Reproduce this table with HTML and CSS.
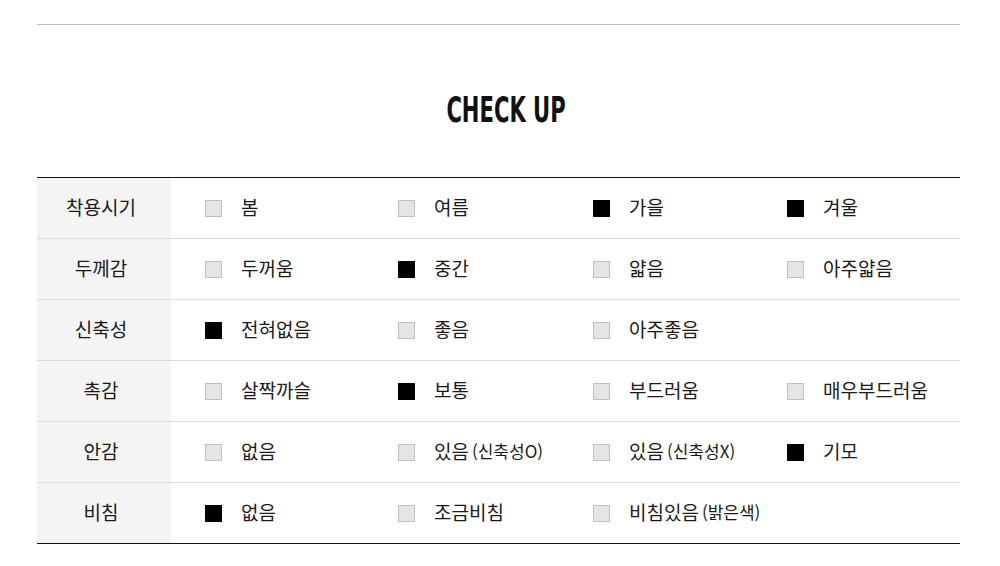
FILE: index.html
```html
<!DOCTYPE html>
<html lang="ko">
<head>
<meta charset="utf-8">
<link rel="stylesheet" href="styles.css">
</head>
<body>
<div class="wrap">
  <div class="topline"></div>
  <h2 class="title"><span>CHECK UP</span></h2>
  <div class="table">
    <div class="row">
      <div class="head">착용시기</div>
      <div class="cells">
        <div class="item"><span class="box"></span>봄</div>
        <div class="item"><span class="box"></span>여름</div>
        <div class="item"><span class="box on"></span>가을</div>
        <div class="item"><span class="box on"></span>겨울</div>
      </div>
    </div>
    <div class="row">
      <div class="head">두께감</div>
      <div class="cells">
        <div class="item"><span class="box"></span>두꺼움</div>
        <div class="item"><span class="box on"></span>중간</div>
        <div class="item"><span class="box"></span>얇음</div>
        <div class="item"><span class="box"></span>아주얇음</div>
      </div>
    </div>
    <div class="row">
      <div class="head">신축성</div>
      <div class="cells">
        <div class="item"><span class="box on"></span>전혀없음</div>
        <div class="item"><span class="box"></span>좋음</div>
        <div class="item"><span class="box"></span>아주좋음</div>
      </div>
    </div>
    <div class="row">
      <div class="head">촉감</div>
      <div class="cells">
        <div class="item"><span class="box"></span>살짝까슬</div>
        <div class="item"><span class="box on"></span>보통</div>
        <div class="item"><span class="box"></span>부드러움</div>
        <div class="item"><span class="box"></span>매우부드러움</div>
      </div>
    </div>
    <div class="row">
      <div class="head">안감</div>
      <div class="cells">
        <div class="item"><span class="box"></span>없음</div>
        <div class="item"><span class="box"></span>있음 <small>(신축성O)</small></div>
        <div class="item"><span class="box"></span>있음 <small>(신축성X)</small></div>
        <div class="item"><span class="box on"></span>기모</div>
      </div>
    </div>
    <div class="row">
      <div class="head">비침</div>
      <div class="cells">
        <div class="item"><span class="box on"></span>없음</div>
        <div class="item"><span class="box"></span>조금비침</div>
        <div class="item"><span class="box"></span>비침있음 <small>(밝은색)</small></div>
      </div>
    </div>
  </div>
</div>
</body>
</html>
```
FILE: styles.css
```css
html, body {
  margin: 0;
  padding: 0;
  background: #fff;
}
body {
  font-family: "Noto Sans CJK KR", "Noto Sans", sans-serif;
  color: #111;
}
.wrap {
  margin-left: 37px;
  width: 923px;
  padding-top: 24px;
}
.topline {
  height: 1px;
  background: #bdbdbd;
}
.title {
  margin: 0;
  padding-top: 18px;
  padding-left: 16px;
  height: 134px;
  display: flex;
  align-items: center;
  justify-content: center;
  font-family: "DejaVu Sans", sans-serif;
  font-stretch: condensed;
  font-weight: bold;
  font-size: 35px;
  color: #111;
  letter-spacing: 0;
}
.title span {
  display: inline-block;
  transform: scaleX(0.67);
}
.table {
  border-top: 1px solid #111;
  border-bottom: 1px solid #111;
}
.row {
  display: flex;
  height: 60px;
}
.row + .row {
  border-top: 1px solid #dcdcdc;
}
.head {
  flex: none;
  box-sizing: border-box;
  width: 134px;
  padding-right: 6px;
  padding-bottom: 4px;
  background: #f4f4f4;
  display: flex;
  align-items: center;
  justify-content: center;
  font-size: 19px;
  color: #1a1a1a;
}
.cells {
  flex: 1;
  min-width: 0;
  display: grid;
  grid-template-columns: 193px 195px 194px 1fr;
  padding-left: 34px;
  align-items: center;
}
.item {
  display: flex;
  align-items: center;
  padding-bottom: 4px;
  font-size: 19px;
  color: #1a1a1a;
  white-space: nowrap;
}
.item small {
  font-size: 17px;
  margin-left: 3px;
}
.box {
  width: 15px;
  height: 15px;
  margin-top: 4px;
  border: 1px solid #c0c0c0;
  background: #e5e5e5;
  margin-right: 19px;
  flex: none;
}
.box.on {
  background: #000;
  border-color: #000;
}
```
